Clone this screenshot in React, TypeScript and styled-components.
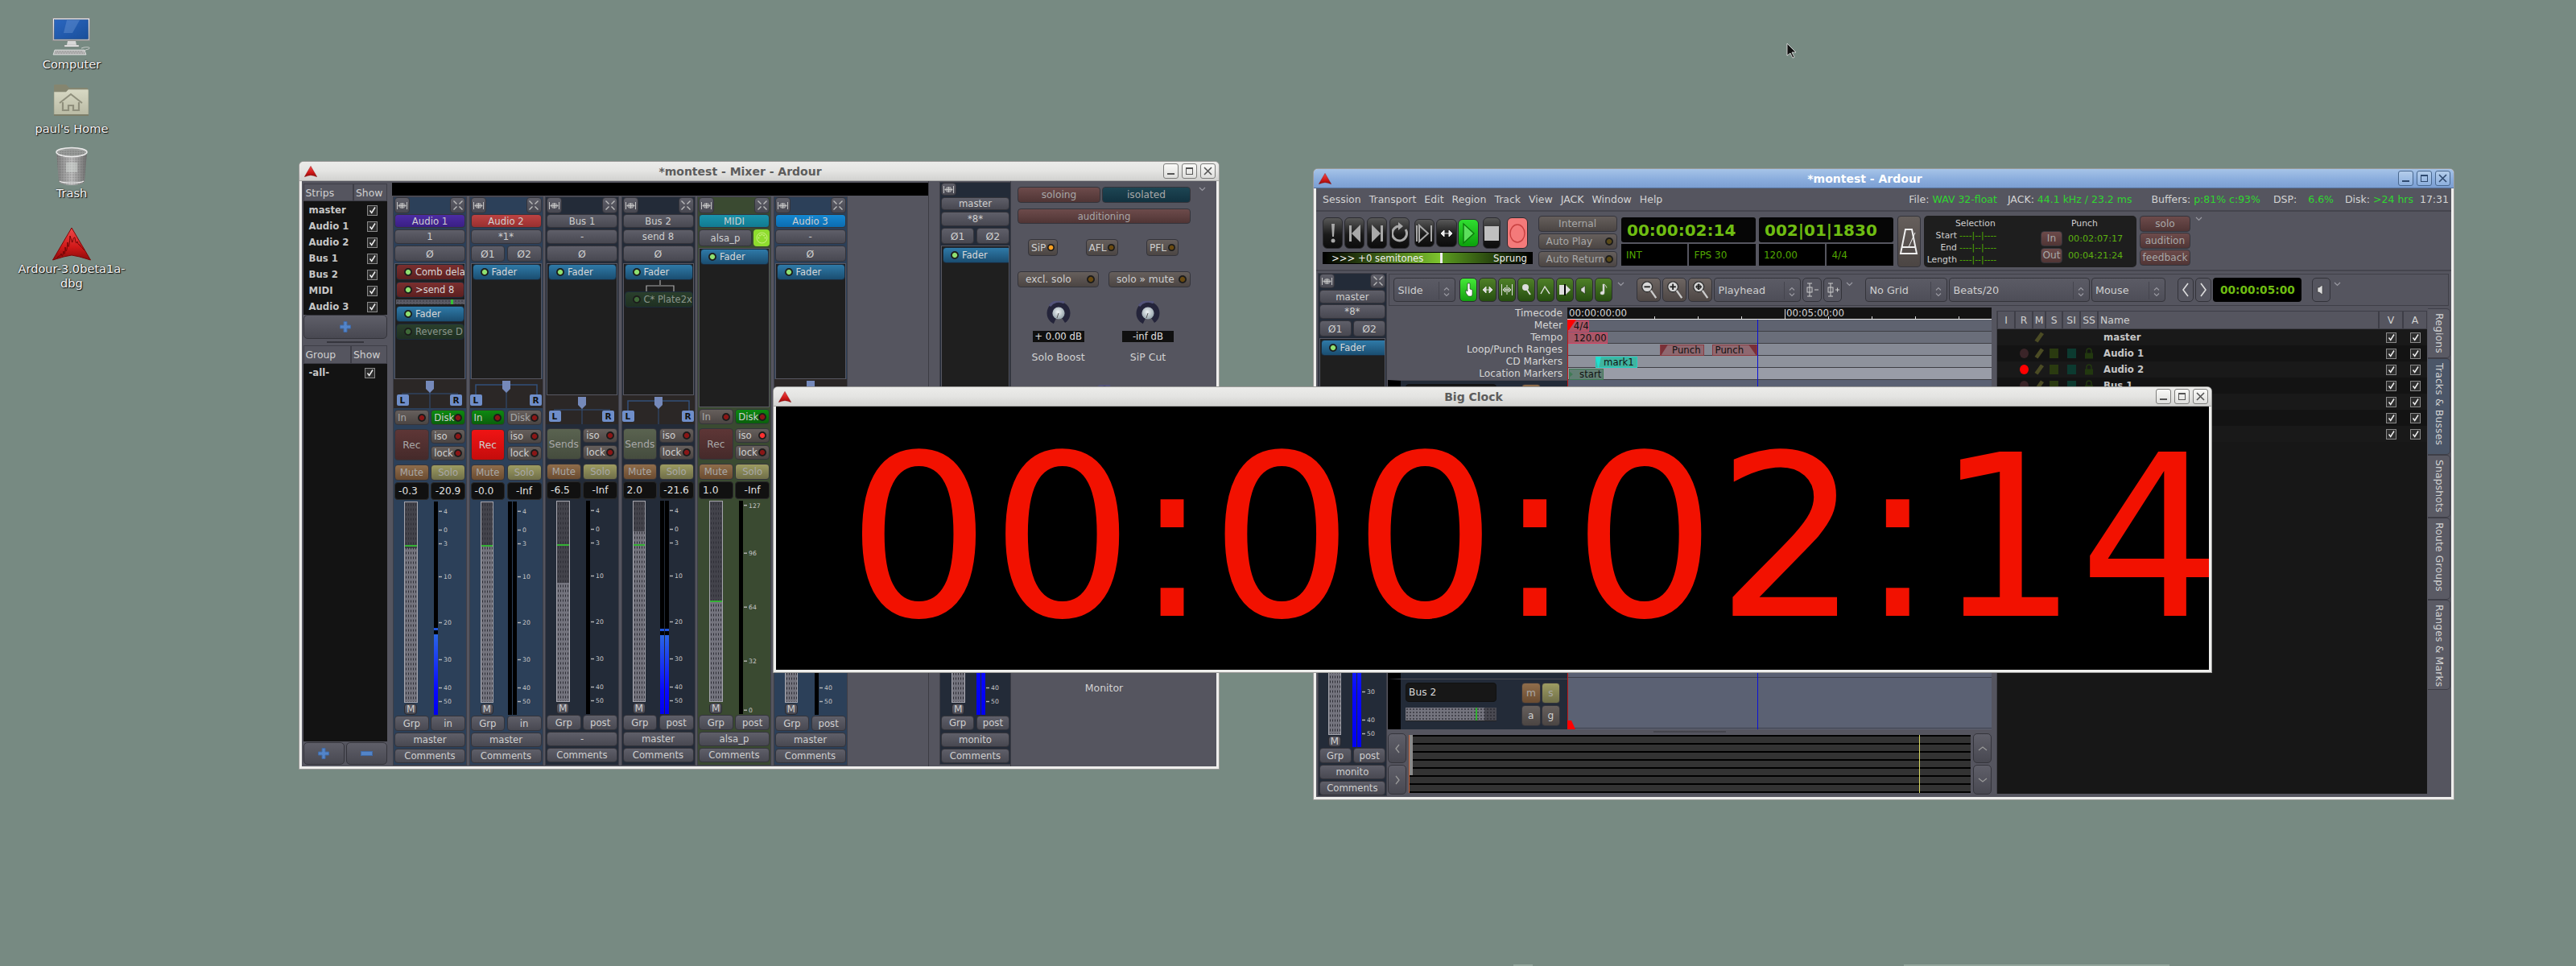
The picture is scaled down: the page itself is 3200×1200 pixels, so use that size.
import React from 'react';
import styled, { createGlobalStyle } from 'styled-components';

const UI = '"DejaVu Sans", "Liberation Sans", sans-serif';
const AUDIO = '#2c4059';
const BUS = '#232b38';
const MIDI = '#3a4a31';

const Global = createGlobalStyle`
  html, body { margin: 0; padding: 0; background: #778a82; }
  #root { width: 3200px; height: 1200px; }
  * { box-sizing: border-box; }
`;

const Desktop = styled.main`
  position: relative; width: 3200px; height: 1200px; overflow: hidden;
  background: #778a82; font-family: ${UI}; font-size: 11.7px; color: #c9c9c9;
`;

/* ---------- desktop icons ---------- */
const IconColumn = styled.div`
  position: absolute; left: 19px; top: 22px; width: 140px;
  display: flex; flex-direction: column; align-items: center;
`;
const DeskIcon = styled.div<{ $h: number }>`
  height: ${p => p.$h}px; width: 100%;
  display: flex; flex-direction: column; align-items: center;
`;
const DeskLabel = styled.div`
  font-size: 14.6px; line-height: 18px; color: #f4f4f4; text-align: center; margin-top: 1px;
  text-shadow: 1px 1px 1px #111, 0 0 2px #222;
`;
const Cursor = styled.svg`position: absolute; left: 2219px; top: 53px; z-index: 9;`;
const EdgeMark = styled.div<{ $x: number; $w: number }>`
  position: absolute; left: ${p => p.$x}px; width: ${p => p.$w}px; bottom: 0; height: 2px; background: #93a59c;
`;

const ComputerIcon = () => (
  <svg width="48" height="48" viewBox="0 0 48 48">
    <defs>
      <linearGradient id="scr" x1="0" y1="0" x2="1" y2="1"><stop offset="0" stopColor="#2a66c0" /><stop offset="1" stopColor="#1a4f9a" /></linearGradient>
      <linearGradient id="bez" x1="0" y1="0" x2="0" y2="1"><stop offset="0" stopColor="#f2f2f2" /><stop offset="1" stopColor="#b8b8b8" /></linearGradient>
    </defs>
    <rect x="0.5" y="0.5" width="46" height="28" fill="url(#bez)" stroke="#8c8c8c" />
    <rect x="2.5" y="2.5" width="42" height="24" fill="url(#scr)" stroke="#123a70" strokeWidth=".5" />
    <path d="M18 3h16l-9 16H14z" fill="#7aa3dc" opacity=".35" />
    <path d="M19 29h10l1 5H18z" fill="#d8d8d8" />
    <rect x="15" y="34" width="18" height="2" fill="#f0f0f0" stroke="#8a8a8a" strokeWidth=".4" />
    <path d="M3 40h37l2 6H1z" fill="#bcbcbc" stroke="#eee" strokeWidth=".6" />
    <path d="M4 42h34M3 44h37" stroke="#6d6d6d" strokeWidth=".8" strokeDasharray="1 1" />
    <path d="M36 38c4 -2 11 -2 10 0s-6 1-5 3" fill="none" stroke="#ddd" strokeWidth=".8" />
  </svg>
);
const HomeIcon = () => (
  <svg width="48" height="48" viewBox="0 0 48 48">
    <defs><linearGradient id="fld" x1="0" y1="0" x2="0" y2="1"><stop offset="0" stopColor="#d8d9c4" /><stop offset="1" stopColor="#b9baa4" /></linearGradient></defs>
    <path d="M3 3h14l4 4h22a1 1 0 0 1 1 1v8H2V4z" fill="#85856f" />
    <path d="M2 12h15l3-3h24a1 1 0 0 1 1 1v31H2z" fill="url(#fld)" stroke="#8f907c" strokeWidth=".6" />
    <rect x="2" y="40" width="43" height="2" fill="#7c7d68" />
    <path d="M9 26l14-11 14 11" fill="none" stroke="#8f8f7c" strokeWidth="2" />
    <path d="M13 25v10h7v-6h6v6h7V25" fill="none" stroke="#8f8f7c" strokeWidth="2.2" />
  </svg>
);
const TrashIcon = () => (
  <svg width="48" height="48" viewBox="0 0 48 48">
    <defs>
      <linearGradient id="tr" x1="0" y1="0" x2="1" y2="0"><stop offset="0" stopColor="#7f7f7f" /><stop offset=".5" stopColor="#c4c4c4" /><stop offset="1" stopColor="#6d6d6d" /></linearGradient>
      <pattern id="mesh" width="2" height="2" patternUnits="userSpaceOnUse"><rect width="1" height="1" fill="#555" opacity=".55" /></pattern>
    </defs>
    <path d="M5 7l3 36c0 3 8 5 16 5s16-2 16-5l3-36z" fill="url(#tr)" />
    <path d="M5 7l3 36c0 3 8 5 16 5s16-2 16-5l3-36z" fill="url(#mesh)" />
    <rect x="17" y="20" width="14" height="12" fill="#d4d9d6" opacity=".5" />
    <ellipse cx="24" cy="7" rx="19" ry="5.5" fill="#9b9e9c" stroke="#e8e8e8" strokeWidth="1.6" />
    <ellipse cx="24" cy="8" rx="16" ry="3.8" fill="url(#mesh)" />
    <path d="M9 43c4 3 26 3 30 0" fill="none" stroke="#eee" strokeWidth="1.2" />
  </svg>
);
const ArdourLogo = ({ w, h, idp }: { w: number; h: number; idp: string }) => (
  <svg width={w} height={h} viewBox="0 0 48 42" preserveAspectRatio="none">
    <defs><linearGradient id={idp} x1="0" y1="0" x2="0" y2="1"><stop offset="0" stopColor="#ee4a4a" /><stop offset=".6" stopColor="#d01818" /><stop offset="1" stopColor="#8c0c0c" /></linearGradient></defs>
    <path d="M24 1L47.5 41 34 37 24 35 14 37 .5 41z" fill={`url(#${idp})`} stroke="#7c0808" strokeWidth="1" />
    {w > 30 && <path d="M6 38c3-3 4-1 5-5 1 5 2 3 3-3 1 6 2 4 2 -5 1 8 2 6 3-6 1 10 2 6 3-8 2 6 2 8 3 8 1-6 2-6 3-6 1 8 2 8 3 5 1 4 2 4 3 4 1 3 4 4 6 7" fill="none" stroke="#6b0606" strokeWidth="1" />}
  </svg>
);

/* ---------- window chrome ---------- */
const Win = styled.section<{ $x: number; $y: number; $w: number; $h: number; $z: number }>`
  position: absolute; left: ${p => p.$x}px; top: ${p => p.$y}px; width: ${p => p.$w}px; height: ${p => p.$h}px;
  z-index: ${p => p.$z}; display: flex; flex-direction: column;
  background: #eeeeec; border-radius: 5px 5px 0 0; box-shadow: 0 0 0 1px #9a9a98;
`;
const TitleBar = styled.header<{ $active?: boolean }>`
  height: 24px; flex: none; display: flex; align-items: center; padding: 0 4px 0 6px;
  border-radius: 5px 5px 0 0;
  background: ${p => p.$active ? 'linear-gradient(#a6c4e8,#88abdc 60%,#7c9fd2)' : 'linear-gradient(#ececea,#e4e4e2 50%,#d2d2d0)'};
  border-bottom: 1px solid ${p => p.$active ? '#56749e' : '#aaaaa8'};
`;
const TitleText = styled.div<{ $active?: boolean }>`
  flex: 1; text-align: center; font-weight: 700; font-size: 14px;
  color: ${p => p.$active ? '#ffffff' : '#5c5c5c'}; white-space: nowrap;
`;
const TitleBtns = styled.div`display: flex; gap: 4px;`;
const TitleBtn = styled.div<{ $active?: boolean }>`
  width: 19px; height: 19px; border: 1px solid ${p => p.$active ? '#49688f' : '#7d7d7b'}; border-radius: 3px;
  background: ${p => p.$active ? 'linear-gradient(#b4cdeb,#8db0de)' : 'linear-gradient(#fafaf8,#dededc)'};
  display: flex; align-items: center; justify-content: center;
`;
const Chrome = ({ title, active, idp }: { title: string; active?: boolean; idp: string }) => {
  const c = active ? '#2f4a6f' : '#555';
  return (
    <TitleBar $active={active}>
      <ArdourLogo w={16} h={14} idp={idp} />
      <TitleText $active={active}>{title}</TitleText>
      <TitleBtns>
        <TitleBtn $active={active}><svg width="13" height="13"><rect x="2" y="9" width="9" height="2" fill={c} /></svg></TitleBtn>
        <TitleBtn $active={active}><svg width="13" height="13"><rect x="2.5" y="2.5" width="8" height="8" fill="none" stroke={c} /><rect x="2" y="2" width="9" height="2" fill={c} /></svg></TitleBtn>
        <TitleBtn $active={active}><svg width="13" height="13"><path d="M2 2l9 9M11 2l-9 9" stroke={c} strokeWidth="1.6" /></svg></TitleBtn>
      </TitleBtns>
    </TitleBar>
  );
};
const WinBody = styled.div<{ $col?: boolean }>`
  flex: 1; min-height: 0; margin: 0 3px 3px; background: #55555f; overflow: hidden; display: flex;
  flex-direction: ${p => p.$col ? 'column' : 'row'};
`;

/* ---------- shared controls ---------- */
const TONES: Record<string, string> = {
  plain: 'linear-gradient(#5f5f69,#484851)',
  warm: 'linear-gradient(#6d6462,#4e4645)',
  in: 'linear-gradient(#0d8a10,#0a5f0c)',
  rec: 'linear-gradient(#5e3636,#452a2a)',
  recOn: 'linear-gradient(#f01414,#c40c0c)',
  sends: 'linear-gradient(#5a6350,#454c3e)',
  mute: 'linear-gradient(#8f6d4b,#6a4b30)',
  solo: 'linear-gradient(#9d9c62,#6f6e48)',
  purple: 'linear-gradient(#4c2ca4,#3a1f84)',
  red: 'linear-gradient(#bc4242,#983030)',
  teal: 'linear-gradient(#1a94ac,#127a90)',
  blue: 'linear-gradient(#1488d2,#0c6cb0)',
  alert: 'linear-gradient(#6d4b4b,#503535)',
  iso: 'linear-gradient(#1d4553,#123240)',
  grey: 'linear-gradient(#665f5c,#4b4543)',
};
const Btn = styled.div<{ $h?: number; $w?: number; $tone?: string; $ml?: number; $mt?: number; $dim?: boolean; $fs?: number }>`
  ${p => p.$h ? `height:${p.$h}px; flex-shrink:0;` : ''}
  ${p => p.$w ? `width:${p.$w}px; flex:none;` : ''}
  ${p => p.$ml ? `margin-left:${p.$ml}px;` : ''}
  ${p => p.$mt ? `margin-top:${p.$mt}px;` : ''}
  display: flex; align-items: center; justify-content: center; white-space: nowrap; overflow: hidden;
  border: 1px solid #34343b; border-radius: 4px; background: ${p => TONES[p.$tone || 'plain']};
  color: ${p => p.$dim ? '#a8a8a8' : '#cfcfcf'}; font-size: ${p => p.$fs || 11.7}px;
`;
const LedBtn = styled(Btn)`justify-content: space-between; padding: 0 3px;`;
const Led = styled.i<{ $c: string; $s?: number }>`
  width: ${p => p.$s || 10}px; height: ${p => p.$s || 10}px; flex: none; border-radius: 50%;
  background: radial-gradient(circle, ${p => p.$c} 0 36%, #1a1a1a 52%, #222 100%);
`;
const Chevron = styled.svg<{ $ml?: number; $mt?: number }>`
  flex: none; margin-left: ${p => p.$ml || 0}px; margin-top: ${p => p.$mt || 0}px;
`;
const Chev = ({ ml, mt }: { ml?: number; mt?: number }) => (
  <Chevron $ml={ml} $mt={mt} width="9" height="6"><path d="M1 1l3.5 3.5L8 1" fill="none" stroke="#9a9aa2" strokeWidth="1.2" /></Chevron>
);
const Check = styled.div`
  width: 13px; height: 13px; border: 1px solid #8a8a8a; background: #2e2e2e;
  display: flex; align-items: center; justify-content: center; flex: none;
`;
const Checkbox = () => (
  <Check><svg width="11" height="11"><path d="M2.5 5.5l2.2 3L9 1.5" fill="none" stroke="#eee" strokeWidth="1.5" /></svg></Check>
);

/* ---------- mixer left column ---------- */
const LeftCol = styled.aside`
  width: 104px; margin: 3px 0 2px 1.5px; flex: none; display: flex; flex-direction: column;
`;
const HeaderRow = styled.div<{ $h: number; $split: number }>`
  height: ${p => p.$h}px; flex: none; display: grid; grid-template-columns: ${p => p.$split}px 1fr;
`;
const HeaderCell = styled.div`
  background: #55555f; border: 1px solid #3e3e47; display: flex; align-items: center; padding-left: 2px;
  color: #d0d0d0; font-size: 12.4px;
`;
const BlackList = styled.div<{ $grow?: boolean; $h?: number }>`
  background: #131313; padding-top: 1px;
  ${p => p.$grow ? 'flex:1;' : ''} ${p => p.$h ? `height:${p.$h}px; flex:none;` : ''}
`;
const ListRow = styled.div<{ $cb: number }>`
  height: 20px; display: flex; align-items: center; justify-content: space-between;
  padding: 0 ${p => p.$cb}px 0 7px; font-weight: 700; color: #c6c6c6; font-size: 11.7px;
`;
const AddBar = styled(Btn)`border-radius: 5px;`;
const PaneBtn = styled(Btn)`flex: 1; border-radius: 5px;`;
const PaneHandle = styled.div`
  height: 8px; flex: none; background-image: radial-gradient(#33333a .7px, transparent .8px);
  background-size: 2px 2px; background-repeat: repeat-x; background-position: center; margin: 0 29px;
`;
const FooterBtns = styled.div`display: flex; gap: 2px; height: 28px; flex: none; margin-top: 1px;`;
const PlusIcon = () => (
  <svg width="14" height="14"><path d="M5 .5h4v4.500h4.500v4H9v4.500H5V9H.5V5H5z" fill="#5384c8" stroke="#3f6aa8" /></svg>
);
const MinusIcon = () => <svg width="15" height="6"><rect x=".5" y=".5" width="14" height="5" fill="#5384c8" stroke="#3f6aa8" /></svg>;

/* ---------- mixer strip ---------- */
const StripArea = styled.div`
  width: 667px; margin-left: 6.5px; flex: none; display: flex; flex-direction: column;
  border-right: 1px solid #3c3c44;
`;
const BlackBar = styled.div`height: 16px; margin-top: 2px; background: #000; flex: none;`;
const StripRow = styled.div`
  display: grid; grid-template-columns: repeat(6, 90px); column-gap: 4.5px; margin-top: 2px; padding-left: 2px;
`;
const StripBox = styled.div<{ $bg: string; $w?: number; $grow?: boolean }>`
  background: ${p => p.$bg}; outline: 1px solid #3e3e47; display: flex; flex-direction: column; padding: 0 1px;
  ${p => p.$w ? `width:${p.$w}px;flex:none;` : ''}
  ${p => p.$grow ? 'height:100%;' : 'height:705px;'}
`;
const StripHead = styled.div<{ $h: number }>`
  height: ${p => p.$h}px; flex: none; display: flex; justify-content: space-between;
`;
const SquareBtn = styled(Btn)`width: 19px; flex: none; height: 100%;`;
const TwoCols = styled.div<{ $mt: number; $h: number; $cols?: string }>`
  margin-top: ${p => p.$mt}px; height: ${p => p.$h}px; flex: none; display: grid;
  grid-template-columns: ${p => p.$cols || '1fr 1fr'}; column-gap: 2.5px;
`;
const WidthIcon = () => (
  <svg width="15" height="13"><path d="M1.5 2v9M13.5 2v9M3 6.5h9M3 6.5l3-3v6zM12 6.5l-3-3v6zM7.5 3v7" stroke="#c4c4c4" fill="none" strokeWidth="1" /></svg>
);
const CloseIcon = () => (
  <svg width="14" height="14"><path d="M1.5 1.5l4 4M12.5 1.5l-4 4M1.5 12.5l4-4M12.5 12.5l-4-4" stroke="#bbb" strokeWidth="1.4" /></svg>
);
const ProcBox = styled.div<{ $h?: number }>`
  margin-top: 2px; flex: ${p => p.$h ? `none` : 1}; ${p => p.$h ? `height:${p.$h}px;` : ''}
  background: #1f1f1f; border: 1px solid #585862; overflow: hidden; padding-top: 0;
`;
const PROC: Record<string, string> = {
  red: 'linear-gradient(#7a2f2f,#5c2020)', blue: 'linear-gradient(#2f7aa8,#1a4d70)', green: 'linear-gradient(#2a3f2c,#1f3022)',
};
const ProcItem = styled.div<{ $k: string; $mt: number }>`
  margin: ${p => p.$mt}px 0 0 1px; height: 20px; width: 85px; border-radius: 4px; border: 1px solid #1c2a3a;
  background: ${p => PROC[p.$k]}; display: flex; align-items: center; gap: 4px; padding-left: 9px;
  white-space: nowrap; font-size: 11.5px;
  color: ${p => p.$k === 'green' ? '#8b968c' : '#d8d8d8'};
`;
const SendMeter = styled.div`
  margin: 2px 1px 0; height: 6px; width: 85px; background: #5a5a64; position: relative;
  background-image: radial-gradient(#33333a .6px, transparent .8px); background-size: 4px 4px;
`;
const SendTick = styled.div`position: absolute; left: 68px; top: 0; width: 3px; height: 6px; background: #35c035;`;
const Panner = styled.div`height: 36px; flex: none; background: #2b2726; margin: 0 -1px;`;
const PanSvg = ({ stereo }: { stereo: boolean }) => (
  <svg width="90" height="36">
    {stereo
      ? <path d="M7 19V7h76v12" fill="none" stroke="#33507a" strokeWidth="1.5" />
      : <path d="M10 18h70" fill="none" stroke="#33507a" strokeWidth="1.2" />}
    <path d="M45 10v26" stroke="#33507a" strokeWidth="1" />
    <path d="M40 2h10v10l-5 5-5-5z" fill="#7589ba" />
    <rect x={stereo ? 0 : 4} y="19" width="15" height="14" rx="2" fill="#6f8ec9" />
    <rect x={stereo ? 74 : 70} y="19" width="15" height="14" rx="2" fill="#6f8ec9" />
    <text x={stereo ? 3.5 : 7.5} y="30" fontSize="10.5" fontWeight="700" fontFamily={UI} fill="#111">L</text>
    <text x={stereo ? 77.5 : 73.5} y="30" fontSize="10.5" fontWeight="700" fontFamily={UI} fill="#111">R</text>
  </svg>
);
const RecCluster = styled.div`
  margin-top: 5px; height: 39px; flex: none; display: grid; grid-template-columns: 1fr 1fr;
  grid-template-rows: 18px 18px; gap: 3px 2.5px;
`;
const BigRec = styled(Btn)`grid-row: 1 / span 2; font-size: 12.2px;`;
const Readout = styled.div<{ $left?: boolean }>`
  background: #111; border-radius: 4px; border: 1px solid #2a2a2a; color: #e2e2e2; font-size: 12.2px;
  display: flex; align-items: center; justify-content: ${p => p.$left ? 'flex-start' : 'center'}; padding-left: ${p => p.$left ? 4 : 0}px;
`;

const MeterRow = styled.div<{ $pl: number; $mt?: number }>`
  margin-top: ${p => p.$mt ?? 2}px; height: 265px; flex: none; display: flex; padding-left: ${p => p.$pl}px;
`;
const FaderCol = styled.div<{ $w: number }>`width: ${p => p.$w}px; flex: none; display: flex; flex-direction: column; align-items: center;`;
const FaderTrack = styled.div`
  position: relative; width: 100%; height: 250px; flex: none; border: 1px solid #a5a5ad;
  background: #43434b; display: flex; flex-direction: column; justify-content: flex-end;
  &::after {
    content: ''; position: absolute; inset: 0;
    background-image: radial-gradient(#2e2e36 .65px, transparent .85px); background-size: 3px 6px;
  }
`;
const FaderFill = styled.div<{ $top: number }>`
  margin-top: ${p => p.$top}px; flex: 1; background: #74747e;
`;
const FaderMark = styled.div<{ $y: number }>`
  position: absolute; left: 0; right: 0; top: ${p => p.$y}px; height: 2px; background: #34b034; z-index: 1;
`;
const Mbtn = styled(Btn)`width: 16px; height: 14px; margin-top: 1px; border-radius: 4px; font-size: 12.2px; border-color: #2a2a30;`;
const Bars = styled.div<{ $ml: number }>`display: flex; gap: 1px; margin-left: ${p => p.$ml}px; flex: none;`;
const Bar = styled.div<{ $w?: number }>`
  width: ${p => p.$w || 5}px; background: #000; display: flex; flex-direction: column; height: 100%;
`;
const Peak = styled.div<{ $y: number }>`margin-top: ${p => p.$y}px; height: 3px; flex: none; background: #1f55dd;`;
const BarFill = styled.div`flex: 1; margin-top: 5px; background: linear-gradient(#2a66e6,#0808ff 70%,#0000f0);`;
const ScaleSvg = styled.svg<{ $ml: number }>`flex: none; margin-left: ${p => p.$ml}px;`;

const DB: [string, number][] = [['4', 12], ['0', 35.3], ['3', 52.3], ['10', 93.3], ['20', 150.3], ['30', 196.3], ['40', 231.3], ['50', 248.3]];
const MID: [string, number][] = [['127', 5.5], ['96', 65], ['64', 132], ['32', 199], ['0', 260]];
const Scale = ({ ticks, ml }: { ticks: [string, number][]; ml: number }) => (
  <ScaleSvg $ml={ml} width="32" height="265">
    {ticks.map(([t, y]) => (
      <g key={t}>
        <rect x="0" y={y - 0.5} width="4" height="1.4" fill="#b5b5b5" />
        <text x="6" y={y + 3} fontSize="7.7" fontFamily={UI} fill="#c6c6c6">{t}</text>
      </g>
    ))}
  </ScaleSvg>
);

type Meter = { pl: number; fw: number; fill: number; mark: number; bars: ([number] | [])[]; ml: number; sml: number; ticks?: [string, number][]; mt?: number };
const Meters = ({ m }: { m: Meter }) => (
  <MeterRow $pl={m.pl} $mt={m.mt}>
    <FaderCol $w={m.fw}>
      <FaderTrack>
        <FaderFill $top={m.fill} />
        <FaderMark $y={m.mark} />
      </FaderTrack>
      <Mbtn>M</Mbtn>
    </FaderCol>
    <Bars $ml={m.ml}>
      {m.bars.map((b, i) => (
        <Bar key={i}>
          {b.length ? <><Peak $y={b[0] as number} /><BarFill /></> : null}
        </Bar>
      ))}
    </Bars>
    <Scale ticks={m.ticks || DB} ml={m.sml} />
  </MeterRow>
);

type StripT = {
  name: string; tone?: string; route: string; phases: string[]; bg: string; box: number; pan: null | 'mono' | 'stereo';
  procs: any[]; inOn?: boolean; diskOn?: boolean; noIO?: boolean; big: string; bigTone: string; isoOn?: boolean;
  gain: string; peak: string; mode: string; out: string; meter: Meter; midi?: boolean;
};

const Proc = ({ k, label, mt, lit = true }: { k: string; label: string; mt: number; lit?: boolean }) => (
  <ProcItem $k={k} $mt={mt}><Led $c={lit ? '#8fe070' : '#3f6a38'} />{label}</ProcItem>
);
const Bracket = styled.svg`display: block; margin-left: 25px;`;

const FADER = { k: 'blue', label: 'Fader', mt: 0 };
const STRIPS: StripT[] = [
  {
    name: 'Audio 1', tone: 'purple', route: '1', phases: ['Ø'], bg: AUDIO, box: 144, pan: 'mono', diskOn: true,
    procs: [{ k: 'red', label: 'Comb dela', mt: 0 }, { k: 'red', label: '>send 8', mt: 2 }, { meter: true }, { ...FADER, mt: 2 }, { k: 'green', label: 'Reverse D', mt: 2, lit: false }],
    big: 'Rec', bigTone: 'rec', gain: '-0.3', peak: '-20.9', mode: 'in', out: 'master',
    meter: { pl: 12, fw: 16.5, fill: 57, mark: 53, bars: [[156.5]], ml: 20.5, sml: 1 },
  },
  {
    name: 'Audio 2', tone: 'red', route: '*1*', phases: ['Ø1', 'Ø2'], bg: AUDIO, box: 144, pan: 'stereo', inOn: true,
    procs: [FADER], big: 'Rec', bigTone: 'recOn', gain: '-0.0', peak: '-Inf', mode: 'in', out: 'master',
    meter: { pl: 12, fw: 16.5, fill: 53, mark: 53, bars: [[], []], ml: 18, sml: 1 },
  },
  {
    name: 'Bus 1', route: '-', phases: ['Ø'], bg: BUS, box: 164, pan: 'mono', noIO: true,
    procs: [FADER], big: 'Sends', bigTone: 'sends', gain: '-6.5', peak: '-Inf', mode: 'post', out: '-',
    meter: { pl: 12, fw: 16.5, fill: 101, mark: 53, bars: [[]], ml: 20.5, sml: 1 },
  },
  {
    name: 'Bus 2', route: 'send 8', phases: ['Ø'], bg: BUS, box: 164, pan: 'stereo', noIO: true,
    procs: [FADER, { bracket: true }, { k: 'green', label: 'C* Plate2x', mt: 0, lit: false }],
    big: 'Sends', bigTone: 'sends', gain: '2.0', peak: '-21.6', mode: 'post', out: 'master',
    meter: { pl: 12, fw: 16.5, fill: 37, mark: 53, bars: [[159], [159]], ml: 18, sml: 1 },
  },
  {
    name: 'MIDI', tone: 'teal', route: 'alsa_p', phases: [], bg: MIDI, box: 198, pan: null, diskOn: true, midi: true,
    procs: [FADER], big: 'Rec', bigTone: 'rec', isoOn: true, gain: '1.0', peak: '-Inf', mode: 'post', out: 'alsa_p',
    meter: { pl: 13, fw: 16.5, fill: 123, mark: 123, bars: [[]], ml: 20.5, sml: 1, ticks: MID },
  },
  {
    name: 'Audio 3', tone: 'blue', route: '-', phases: ['Ø'], bg: AUDIO, box: 144, pan: 'mono', diskOn: true,
    procs: [FADER], big: 'Rec', bigTone: 'rec', gain: '0.0', peak: '-Inf', mode: 'post', out: 'master',
    meter: { pl: 12, fw: 16.5, fill: 53, mark: 53, bars: [[]], ml: 20.5, sml: 1 },
  },
];

const RED_OFF = '#8a1616';
const MidiDot = styled.div`
  width: 20px; flex: none; background: #8edc2e; border-radius: 4px; display: flex; align-items: center; justify-content: center;
`;
const RouteRow = styled.div<{ $h: number }>`display: flex; gap: 2px; margin-top: 2px; height: ${p => p.$h}px; flex: none;`;
const RouteBtn = styled(Btn)`flex: 1;`;

const MixerStrip = ({ s }: { s: StripT }) => (
  <StripBox $bg={s.bg}>
    <StripHead $h={20}>
      <SquareBtn><WidthIcon /></SquareBtn>
      <SquareBtn><CloseIcon /></SquareBtn>
    </StripHead>
    <Btn $h={17} $mt={1} $tone={s.tone}>{s.name}</Btn>
    {s.midi ? (
      <RouteRow $h={21}>
        <RouteBtn>{s.route}</RouteBtn>
        <MidiDot><svg width="15" height="15"><circle cx="7.5" cy="7.5" r="6.5" fill="none" stroke="#c8f080" /><circle cx="3.5" cy="7.5" r="1" fill="#c8f080" /><circle cx="11.5" cy="7.5" r="1" fill="#c8f080" /><circle cx="7.5" cy="3.5" r="1" fill="#c8f080" /><circle cx="5" cy="4.5" r="1" fill="#c8f080" /><circle cx="10" cy="4.5" r="1" fill="#c8f080" /></svg></MidiDot>
      </RouteRow>
    ) : (
      <>
        <Btn $h={18} $mt={2}>{s.route}</Btn>
        <TwoCols $mt={2} $h={20} $cols={s.phases.length > 1 ? '1fr 1fr' : '1fr'}>
          {s.phases.map(p => <Btn key={p} $fs={12.4}>{p}</Btn>)}
        </TwoCols>
      </>
    )}
    <ProcBox $h={s.box}>
      {s.procs.map((p, i) => p.meter
        ? <SendMeter key={i}><SendTick /></SendMeter>
        : p.bracket
          ? <Bracket key={i} width="40" height="14"><path d="M20 0v6M3 14V7h34v7" fill="none" stroke="#a8a8a8" strokeWidth="1.2" /></Bracket>
          : <Proc key={i} k={p.k} label={p.label} mt={p.mt} lit={p.lit !== false} />)}
    </ProcBox>
    {s.pan && <Panner><PanSvg stereo={s.pan === 'stereo'} /></Panner>}
    {!s.noIO && (
      <TwoCols $mt={2} $h={19}>
        <LedBtn $tone={s.inOn ? 'in' : 'grey'} $dim={!s.inOn}>In<Led $c={RED_OFF} /></LedBtn>
        <LedBtn $tone={s.diskOn ? 'in' : 'grey'} $dim={!s.diskOn}>Disk<Led $c={RED_OFF} /></LedBtn>
      </TwoCols>
    )}
    <RecCluster>
      <BigRec $tone={s.bigTone} $dim={s.bigTone !== 'recOn'}>{s.big}</BigRec>
      <LedBtn $tone="grey">iso<Led $c={s.isoOn ? '#ff3030' : RED_OFF} /></LedBtn>
      <LedBtn $tone="grey">lock<Led $c={RED_OFF} /></LedBtn>
    </RecCluster>
    <TwoCols $mt={5} $h={20}>
      <Btn $tone="mute" $dim>Mute</Btn>
      <Btn $tone="solo" $dim>Solo</Btn>
    </TwoCols>
    <TwoCols $mt={2} $h={22}>
      <Readout $left>{s.gain}</Readout>
      <Readout>{s.peak}</Readout>
    </TwoCols>
    <Meters m={s.meter} />
    <TwoCols $mt={1} $h={19}>
      <Btn>Grp</Btn>
      <Btn>{s.mode}</Btn>
    </TwoCols>
    <Btn $h={18} $mt={2}>{s.out}</Btn>
    <Btn $h={18} $mt={2}>Comments</Btn>
  </StripBox>
);

/* ---------- mixer master + monitor ---------- */
const MasterColumn = styled.div`width: 87px; margin: 2px 0 3px 14px; flex: none;`;
const MonitorPane = styled.div`flex: 1; padding: 7px 0 0 8px; border-left: 1px solid #3c3c44; display: flex; flex-direction: column;`;
const MonRow = styled.div<{ $mt?: number; $h: number; $gap?: number }>`
  display: flex; margin-top: ${p => p.$mt || 0}px; height: ${p => p.$h}px; gap: ${p => p.$gap || 0}px; flex: none;
`;
const KnobGrid = styled.div`display: grid; grid-template-columns: 101.2px 121.6px; margin-top: 17px; flex: none;`;
const KnobCol = styled.div`display: flex; flex-direction: column; align-items: center;`;
const KnobValue = styled.div`
  width: 64px; height: 14px; margin-top: 7px; background: #101010; color: #e0e0e0; font-size: 11.7px;
  display: flex; align-items: center; justify-content: center; white-space: nowrap;
`;
const KnobLabel = styled.div<{ $mt?: number }>`margin-top: ${p => p.$mt ?? 11}px; height: 16px; line-height: 16px; color: #d2d2d2; font-size: 12.5px; white-space: nowrap;`;
const CenterCol = styled.div`width: 215px; margin-top: 26px; display: flex; flex-direction: column; align-items: center; flex: none;`;
const Knob = ({ id }: { id: string }) => (
  <svg width="30" height="30" viewBox="0 0 30 30">
    <defs><radialGradient id={id} cx=".45" cy=".4" r=".6"><stop offset="0" stopColor="#eef2f4" /><stop offset="1" stopColor="#95a3ab" /></radialGradient></defs>
    <circle cx="15" cy="15" r="14.5" fill="#24243a" />
    <path d="M15 15L25 30H8z" fill="#55555f" />
    <path d="M4 6a14 14 0 0 1 18-4" fill="none" stroke="#54547a" strokeWidth="3" />
    <circle cx="15" cy="15" r="7.6" fill={`url(#${id})`} />
    <path d="M15 15l-2 6" stroke="#555" strokeWidth="1" />
  </svg>
);

/* ---------- ardour transport ---------- */
const MenuBar = styled.nav`
  height: 29px; flex: none; display: flex; align-items: center; padding-left: 8px; font-size: 12.5px;
  border-bottom: 2px solid #45454e; color: #d4d4d4; white-space: nowrap;
`;
const MenuItem = styled.span`margin-right: 10px;`;
const Stat = styled.span<{ $g?: boolean; $ml?: number }>`
  color: ${p => p.$g ? '#30d630' : '#d4d4d4'}; ${p => p.$ml ? `margin-left:${p.$ml}px;` : ''}
`;
const StatGroup = styled.div`margin-left: auto; padding-right: 3px; display: flex; white-space: pre;`;
const TransportBar = styled.div`height: 74px; flex: none; display: flex; border-bottom: 2px solid #45454e; padding-left: 8px;`;
const TransportLeft = styled.div`width: 261px; flex: none; padding-top: 7px;`;
const TButtons = styled.div`display: flex; align-items: center; height: 39px;`;
const TBtn = styled.div<{ $w: number; $ml?: number; $h?: number; $k?: string }>`
  width: ${p => p.$w}px; height: ${p => p.$h || 39}px; margin-left: ${p => p.$ml || 0}px; flex: none;
  border-radius: 6px; display: flex; align-items: center; justify-content: center;
  background: ${p => p.$k === 'play' ? 'linear-gradient(#30de30,#0ca00c)' : p.$k === 'rec' ? '#f47a7a' : 'linear-gradient(#585858,#1a1a1a 55%,#0c0c0c)'};
  border: 1px solid #2b2b30;
`;
const Shuttle = styled.div`
  margin-top: 4px; height: 15px; border: 1px solid #000; position: relative; color: #eee; font-size: 11.7px;
  background: linear-gradient(90deg,#000 0,#7dc42e 56%,#eee 56%,#eee 57%,#5a9a20 57.1%,#000 100%);
  display: flex; align-items: center; justify-content: space-between; padding: 0 6px 0 10px; white-space: nowrap;
`;
const AutoCol = styled.div`width: 98px; margin: 5px 0 0 6.6px; flex: none; display: flex; flex-direction: column; gap: 2px;`;
const AutoBtn = styled(LedBtn)`padding: 0 4px 0 9px;`;
const ClockGrid = styled.div`width: 338px; margin: 7px 0 0 5.4px; flex: none; display: flex; gap: 4px;`;
const ClockPair = styled.div`
  width: 167px; flex: none; display: grid; grid-template-columns: 1fr 1fr; grid-template-rows: 31px 27px; gap: 2px;
`;
const ClockMain = styled.div`
  grid-column: span 2; background: #060606; color: #6fbd12; font-weight: 700; font-size: 20px; border-radius: 3px;
  display: flex; align-items: center; padding-left: 7px; white-space: nowrap;
`;
const ClockCell = styled.div`
  background: #000; color: #52a800; font-size: 12px; display: flex; align-items: center; padding-left: 6px; white-space: nowrap;
`;
const Metro = styled(Btn)`margin: 5px 0 0 5px; width: 29px; height: 64px; flex: none;`;
const SelPanel = styled.div`
  width: 264px; height: 64px; margin: 5px 0 0 4px; flex: none; background: #1e1e1e; border-radius: 5px;
  display: grid; grid-template-columns: 145px 1fr; font-size: 10.8px; color: #d0d0d0;
`;
const SelCol = styled.div`display: flex; flex-direction: column; padding-top: 3px;`;
const SelHead = styled.div<{ $pl: number }>`height: 14px; line-height: 14px; padding-left: ${p => p.$pl}px; white-space: nowrap;`;
const SelLine = styled.div<{ $mt?: number }>`
  display: flex; align-items: center; height: 14px; margin-top: ${p => p.$mt || 0}px; white-space: nowrap;
`;
const SelName = styled.div`width: 41px; text-align: right; margin-right: 3px; flex: none;`;
const DashVal = styled.span`color: #50b000; letter-spacing: 0; font-size: 10.8px;`;
const PunchRow = styled.div<{ $mt?: number }>`display: flex; align-items: center; gap: 7px; height: 20px; margin-top: ${p => p.$mt || 0}px;`;
const PunchVal = styled.span`color: #5cb010; font-size: 11.2px;`;
const AlertCol = styled.div`width: 63px; margin: 5px 0 0 4px; flex: none; display: flex; flex-direction: column; gap: 1px;`;

const g = '#a9a9a9';
const Ic = ({ children, w = 20, h = 30 }: any) => <svg width={w} height={h} viewBox={`0 0 ${w} ${h}`}>{children}</svg>;

/* ---------- ardour editor ---------- */
const MainRow = styled.div`flex: 1; min-height: 0; display: flex; padding: 3px 0 2px 2.6px;`;
const RightCol = styled.div`flex: 1; margin-left: 2px; display: flex; flex-direction: column; min-width: 0;`;
const Toolbar = styled.div`
  height: 40px; flex: none; margin: 0 3px 0 1.4px; border: 1px solid #3f3f47; display: flex; align-items: center; padding-left: 5px;
`;
const Select = styled.div<{ $w: number; $ml?: number }>`
  width: ${p => p.$w}px; height: 30px; margin-left: ${p => p.$ml || 0}px; flex: none; border: 1px solid #34343b; border-radius: 4px;
  background: linear-gradient(#5b5b65,#4e4e58); display: flex; align-items: center; padding-left: 4px; position: relative;
  font-size: 12.8px; color: #cfcfcf; white-space: nowrap;
`;
const SelArrow = styled.svg`position: absolute; right: 0; top: 4px; border-left: 1px solid #45454e; padding: 3px 5px 0 4px; width: 20px; height: 22px;`;
const SelectBox = ({ w, ml, children }: any) => (
  <Select $w={w} $ml={ml}>{children}<SelArrow viewBox="0 0 10 18"><path d="M2 7l3-3 3 3M2 11l3 3 3-3" fill="none" stroke="#9a9aa2" strokeWidth="1.1" /></SelArrow></Select>
);
const ModeBtn = styled.div<{ $on?: boolean; $ml?: number }>`
  width: 22px; height: 30px; margin-left: ${p => p.$ml ?? 2}px; flex: none; border-radius: 5px; border: 1px solid #2c2c30;
  background: ${p => p.$on ? 'linear-gradient(#44e838,#14a010)' : 'linear-gradient(#4f8028,#264e10)'};
  display: flex; align-items: center; justify-content: center;
`;
const ZoomBtn = styled.div<{ $w?: number; $ml?: number; $plain?: boolean }>`
  width: ${p => p.$w || 30}px; height: 30px; margin-left: ${p => p.$ml ?? 2}px; flex: none; border-radius: 5px; border: 1px solid #33333a;
  background: ${p => p.$plain ? '#55555f' : 'linear-gradient(#6d6562,#4d4644)'};
  display: flex; align-items: center; justify-content: center;
`;
const NudgeClock = styled.div`
  width: 110px; height: 30px; margin-left: 2px; flex: none; background: #000; border-radius: 4px; color: #6fbd12;
  font-weight: 700; font-size: 13.7px; display: flex; align-items: center; justify-content: center;
`;
const LowerRow = styled.div`flex: 1; min-height: 0; margin-top: 2px; display: flex;`;
const EditorCol = styled.div`width: 750px; flex: none; display: flex; flex-direction: column;`;
const EditorTop = styled.div`height: 524px; flex: none; display: flex;`;
const RulerLabels = styled.div`width: 223px; flex: none; display: flex; flex-direction: column; background: #55555f;`;
const RulerLabel = styled.div`
  height: 15px; flex: none; text-align: right; padding-right: 6px; line-height: 15px; color: #d6d6d6; font-size: 12.2px; white-space: nowrap;
`;
const TrackHeader = styled.div<{ $h: number }>`
  height: ${p => p.$h}px; flex: none; display: flex; background: ${BUS}; border-left: 16px solid #000; padding: 4px 0 0 6px; position: relative;
  border-top: 1px solid #4a4a52;
`;
const HeadLeft = styled.div`width: 113px; flex: none;`;
const TrackName = styled.div`
  height: 24px; background: #171717; border-radius: 4px; border: 1px solid #111; color: #d8d8d8; font-size: 12.2px;
  display: flex; align-items: center; padding-left: 3px;
`;
const MiniFader = styled.div`
  margin-top: 7px; height: 17px; background: #74747e; position: relative; border-bottom: 1px solid #222;
  background-image: radial-gradient(#33333b .65px, transparent .85px); background-size: 4px 4px;
`;
const MiniDark = styled.div`position: absolute; right: 0; top: 0; bottom: 0; width: 15px; background: rgba(30,30,36,.5);`;
const MiniMark = styled.div`position: absolute; right: 24px; top: 0; bottom: 0; width: 2px; background: #34b034;`;
const HeadBtns = styled.div`
  margin-left: 31px; width: 48px; display: grid; grid-template-columns: 23.5px 23.5px; grid-template-rows: 26px 26px; gap: 2px 1px; flex: none;
`;
const Canvas = styled.div`flex: 1; min-width: 0; position: relative; background: #5b6173; display: flex; flex-direction: column; overflow: hidden;`;
const Ruler = styled.div`
  height: 15px; flex: none; background: #131313; border-bottom: 1px solid #f0f0f0; position: relative; color: #d8d8d8; font-size: 11.8px; line-height: 15px;
`;
const RulerText = styled.span<{ $x: number }>`position: absolute; left: ${p => p.$x}px; top: 0;`;
const RulerTick = styled.i<{ $x: number; $h: number }>`position: absolute; left: ${p => p.$x}px; bottom: 0; width: 1px; height: ${p => p.$h}px; background: #ddd;`;
const MarkRow = styled.div<{ $c: string }>`height: 15px; flex: none; background: ${p => p.$c}; border-bottom: 1px solid #3e3e44;`;
const Track = styled.div<{ $h: number }>`height: ${p => p.$h}px; flex: none; border-bottom: 1px solid #3e404c;`;
const Marker = styled.div<{ $x: number; $y: number; $w: number; $h: number; $bg: string; $bd: string; $pl?: number }>`
  position: absolute; left: ${p => p.$x}px; top: ${p => p.$y}px; width: ${p => p.$w}px; height: ${p => p.$h}px;
  background: ${p => p.$bg}; border: 1px solid ${p => p.$bd}; color: #111; font-size: 11.7px; display: flex; align-items: center;
  padding-left: ${p => p.$pl ?? 3}px; white-space: nowrap; overflow: hidden;
`;
const MarkerFlag = styled.svg<{ $x: number; $y: number }>`position: absolute; left: ${p => p.$x}px; top: ${p => p.$y}px; z-index: 3;`;
const VLine = styled.div<{ $x: number; $c: string; $top?: number }>`
  position: absolute; left: ${p => p.$x}px; top: ${p => p.$top || 0}px; bottom: 0; width: 1px; background: ${p => p.$c}; z-index: 2;
`;
const Handle = styled.div`
  height: 5px; flex: none; background-image: radial-gradient(#33333a .6px, transparent .8px); background-size: 2px 2px;
  background-repeat: repeat-x; background-position: center; margin: 0 330px;
`;
const SummaryRow = styled.div`flex: 1; min-height: 0; display: flex; gap: 2px; padding: 0 0 1px 0.3px;`;
const NavCol = styled.div`width: 23px; flex: none; display: flex; flex-direction: column; gap: 2px;`;
const NavBtn = styled(Btn)`flex: 1; border-radius: 5px;`;
const Summary = styled.div`flex: 1; min-width: 0; background: #000; padding: 2px 0; display: flex; flex-direction: column; gap: 2px; position: relative; margin: 2px 1px;`;
const SumLine = styled.div`flex: 1; background: #333;`;
const SumMark = styled.div<{ $x: number; $c: string; $w?: number; $bottom?: number }>`
  position: absolute; left: ${p => p.$x}px; top: 0; bottom: ${p => p.$bottom || 0}px; width: ${p => p.$w || 1}px; background: ${p => p.$c};
`;

const TrackList = styled.div`
  width: 535px; margin: 4px 0 2px 6px; flex: none; background: #171717; display: flex; flex-direction: column; border-left: 1px solid #44444c;
`;
const COLS = '22px 22px 16px 21px 22px 22px 349px 30px 30px';
const ListHead = styled.div`
  height: 23px; flex: none; display: grid; grid-template-columns: ${COLS}; background: #55555f;
`;
const ListHeadCell = styled.div<{ $left?: boolean }>`
  border: 1px solid #3e3e47; display: flex; align-items: center; justify-content: ${p => p.$left ? 'flex-start' : 'center'}; padding-left: ${p => p.$left ? 2 : 0}px;
  color: #d0d0d0; font-size: 12.4px; white-space: nowrap;
`;
const TrackRow = styled.div<{ $alt?: boolean }>`
  height: 20px; flex: none; display: grid; grid-template-columns: ${COLS}; align-items: center; justify-items: center;
  background: ${p => p.$alt ? '#131313' : '#191919'};
`;
const TrackRowName = styled.div`justify-self: start; padding-left: 7px; font-weight: 700; font-size: 11.7px; color: #c6c6c6;`;
const RecDot = styled.i<{ $on: boolean }>`width: 11px; height: 12px; border-radius: 50%; background: ${p => p.$on ? '#ff0000' : '#3a2428'};`;
const Swatch = styled.i<{ $c: string }>`width: 11px; height: 12px; background: ${p => p.$c};`;
const Tabs = styled.div`width: 28px; margin: 1px 0 0 1px; flex: none; display: flex; flex-direction: column; align-items: stretch;`;
const Tab = styled.div<{ $h: number; $on?: boolean }>`
  height: ${p => p.$h}px; flex: none; writing-mode: vertical-rl; display: flex; align-items: center; justify-content: flex-start;
  padding-top: 5px; border: 1px solid #3e3e47; border-left: none; border-radius: 0 5px 5px 0; font-size: 12.3px; white-space: nowrap;
  background: ${p => p.$on ? '#4b5668' : '#5a5a64'}; color: #d2d2d2; letter-spacing: .2px;
`;

/* ---------- big clock ---------- */
const BigClockBody = styled.div`
  flex: 1; margin: 0 3px 3px; background: #000; overflow: hidden; padding-left: 88.5px;
  font-family: "DejaVu Sans", sans-serif; font-size: 280px; line-height: 326px; color: #f21100; white-space: nowrap; letter-spacing: 0;
`;

const VISIBLE_40_50: [string, number][] = [['40', 231.3], ['50', 248.3]];
const VISIBLE_30_50: [string, number][] = [['30', 196.3], ['40', 231.3], ['50', 248.3]];

const Mixer = () => (
  <Win $x={372} $y={201} $w={1142} $h={754} $z={1}>
    <Chrome title="*montest - Mixer - Ardour" idp="l1" />
    <WinBody>
      <LeftCol>
        <HeaderRow $h={22} $split={62.5}><HeaderCell>Strips</HeaderCell><HeaderCell>Show</HeaderCell></HeaderRow>
        <BlackList $h={141}>
          {['master', 'Audio 1', 'Audio 2', 'Bus 1', 'Bus 2', 'MIDI', 'Audio 3'].map(n => (
            <ListRow key={n} $cb={12}>{n}<Checkbox /></ListRow>
          ))}
        </BlackList>
        <AddBar $h={30}><PlusIcon /></AddBar>
        <PaneHandle />
        <HeaderRow $h={23} $split={59.5}><HeaderCell>Group</HeaderCell><HeaderCell>Show</HeaderCell></HeaderRow>
        <BlackList $grow>
          <ListRow $cb={15}>-all-<Checkbox /></ListRow>
        </BlackList>
        <FooterBtns>
          <PaneBtn><PlusIcon /></PaneBtn>
          <PaneBtn><MinusIcon /></PaneBtn>
        </FooterBtns>
      </LeftCol>
      <StripArea>
        <BlackBar />
        <StripRow>{STRIPS.map(s => <MixerStrip key={s.name} s={s} />)}</StripRow>
      </StripArea>
      <MasterColumn>
        <StripBox $bg={BUS} $grow>
          <StripHead $h={16}><SquareBtn><WidthIcon /></SquareBtn></StripHead>
          <Btn $h={16} $mt={2}>master</Btn>
          <Btn $h={18} $mt={2}>*8*</Btn>
          <TwoCols $mt={2} $h={20}><Btn $fs={12.4}>Ø1</Btn><Btn $fs={12.4}>Ø2</Btn></TwoCols>
          <ProcBox $h={316}><Proc k="blue" label="Fader" mt={1} /></ProcBox>
          <Meters m={{ pl: 13, fw: 16.5, fill: 53, mark: 53, bars: [[40], [40]], ml: 14, sml: 1, mt: 2, ticks: VISIBLE_40_50 }} />
          <TwoCols $mt={1} $h={18}><Btn>Grp</Btn><Btn>post</Btn></TwoCols>
          <Btn $h={18} $mt={3}>monito</Btn>
          <Btn $h={18} $mt={2}>Comments</Btn>
        </StripBox>
      </MasterColumn>
      <MonitorPane>
        <MonRow $h={20} $gap={2}>
          <Btn $w={103} $tone="alert" $dim $fs={12.2}>soloing</Btn>
          <Btn $w={110} $tone="iso" $dim $fs={12.2}>isolated</Btn>
          <Chev ml={8} />
        </MonRow>
        <MonRow $mt={7} $h={19}><Btn $w={215} $tone="alert" $dim $fs={11.7}>auditioning</Btn></MonRow>
        <MonRow $mt={19} $h={21}>
          <LedBtn $w={36.5} $ml={13} $tone="grey" $fs={12.2}>SiP<Led $c="#ffa020" $s={9} /></LedBtn>
          <LedBtn $w={40} $ml={35} $tone="grey" $fs={12.2}>AFL<Led $c="#6a4a10" $s={9} /></LedBtn>
          <LedBtn $w={39.5} $ml={35.5} $tone="grey" $fs={12.2}>PFL<Led $c="#6a4a10" $s={9} /></LedBtn>
        </MonRow>
        <MonRow $mt={19} $h={20}>
          <AutoBtn $w={100.6} $tone="grey" $fs={12.2}>excl. solo<Led $c="#6a4a10" /></AutoBtn>
          <AutoBtn $w={102} $ml={12.4} $tone="grey" $fs={12.2}>solo » mute<Led $c="#6a4a10" /></AutoBtn>
        </MonRow>
        <KnobGrid>
          <KnobCol><Knob id="k1" /><KnobValue>+ 0.00 dB</KnobValue><KnobLabel>Solo Boost</KnobLabel></KnobCol>
          <KnobCol><Knob id="k2" /><KnobValue>-inf dB</KnobValue><KnobLabel>SiP Cut</KnobLabel></KnobCol>
        </KnobGrid>
        <CenterCol>
          <Knob id="k3" />
          <KnobLabel $mt={339}>Monitor</KnobLabel>
        </CenterCol>
      </MonitorPane>
    </WinBody>
  </Win>
);

const MODE_ICONS = [
  <path d="M7 3v10l-2-2v4l3 4h4l1-2v-6l-3-1V3z" fill="#fff" stroke="#222" strokeWidth=".6" />,
  <path d="M2 11h12M2 11l4-4v8zM14 11l-4-4v8z" fill="#ddd" stroke="#ddd" />,
  <path d="M1.500 4v14M14.500 4v14M3 11h10M3 11l3-3v6zM13 11l-3-3v6zM8 5v12" stroke="#ddd" fill="none" />,
  <g><circle cx="7" cy="8" r="4" fill="#ddd" /><path d="M9 11l4 6" stroke="#ddd" strokeWidth="2" /></g>,
  <path d="M2 16l5-9 6 9" fill="none" stroke="#ddd" strokeWidth="1.4" />,
  <g><rect x="1" y="5" width="7" height="12" fill="#ddd" /><path d="M9 5v12l6-6z" fill="#ddd" /><rect x="7" y="4" width="2" height="14" fill="#000" /></g>,
  <path d="M9 6v10L5 13H4V9h1z" fill="#ddd" stroke="#222" strokeWidth=".5" />,
  <path d="M9 4v11a2.500 2 0 1 1-2-2V4zM9 4c2 2 3 3 3 5" fill="#ddd" stroke="#ccc" strokeWidth=".5" />,
];
const Mag = ({ sign }: { sign: string }) => (
  <svg width="24" height="26" viewBox="0 0 26 28">
    <circle cx="11" cy="10" r="7" fill="#d8d8d8" stroke="#333" strokeWidth="1.5" />
    <path d="M16 15l7 10" stroke="#ccc" strokeWidth="2.5" />
    {sign !== '-' && <path d="M11 6v8" stroke="#222" strokeWidth="2" />}
    <path d="M7 10h8" stroke="#222" strokeWidth="2" />
    {sign === '=' && <circle cx="11" cy="10" r="3" fill="none" stroke="#222" />}
  </svg>
);

const TRACKS = ['master', 'Audio 1', 'Audio 2', 'Bus 1', '', '', ''];
const Pencil = () => <svg width="12" height="14"><path d="M4.500 13.500L.5 11 8 .5l4 2.500z" fill="#4b4b24" /></svg>;
const LockIc = () => <svg width="12" height="14"><path d="M3 7V4a3 3 0 0 1 6 0v3" fill="none" stroke="#22380f" strokeWidth="1.5" /><rect x="1" y="6.500" width="10" height="7" fill="#22380f" /></svg>;

const Ardour = () => (
  <Win $x={1632} $y={210} $w={1416} $h={783} $z={2}>
    <Chrome title="*montest - Ardour" active idp="l2" />
    <WinBody $col>
      <MenuBar>
        {['Session', 'Transport', 'Edit', 'Region', 'Track', 'View', 'JACK', 'Window', 'Help'].map(m => <MenuItem key={m}>{m}</MenuItem>)}
        <StatGroup>
          <Stat>File: </Stat><Stat $g>WAV 32-float</Stat>
          <Stat $ml={13}>JACK: </Stat><Stat $g>44.1 kHz / 23.2 ms</Stat>
          <Stat $ml={24}>Buffers: </Stat><Stat $g>p:81% c:93%</Stat>
          <Stat $ml={16}>DSP: </Stat><Stat $g $ml={10}>6.6%</Stat>
          <Stat $ml={14}>Disk: </Stat><Stat $g>&gt;24 hrs</Stat>
          <Stat $ml={8}>17:31</Stat>
        </StatGroup>
      </MenuBar>
      <TransportBar>
        <TransportLeft>
          <TButtons>
            <TBtn $w={25}><Ic w={12} h={30}><path d="M4 3h4l-1 16H5z" fill={g} /><circle cx="6" cy="24" r="2.5" fill={g} /></Ic></TBtn>
            <TBtn $w={25} $ml={2}><Ic><rect x="3" y="5" width="3" height="20" fill={g} /><path d="M17 4v22L6 15z" fill={g} /></Ic></TBtn>
            <TBtn $w={25} $ml={3}><Ic><rect x="14" y="5" width="3" height="20" fill={g} /><path d="M3 4v22l11-11z" fill={g} /></Ic></TBtn>
            <TBtn $w={25} $ml={3}><Ic><path d="M10 6a9 9 0 1 0 7 4" fill="none" stroke={g} strokeWidth="3" /><path d="M8 1l6 5-6 5z" fill={g} /></Ic></TBtn>
            <TBtn $w={25.5} $ml={5.5} $h={35}><Ic w={22} h={30}><path d="M2 5v20M20 5v20" stroke={g} strokeWidth="2" /><path d="M5 5v20l11-10z" fill="none" stroke={g} strokeWidth="2" /></Ic></TBtn>
            <TBtn $w={25.6} $ml={2} $h={35}><Ic w={18} h={16}><path d="M2 8h14M2 8l4-4v8zM16 8l-4-4v8z" fill="#eee" stroke="#eee" /></Ic></TBtn>
            <TBtn $w={25.6} $ml={1.4} $h={35} $k="play"><Ic w={18} h={30}><path d="M3 3v24l13-12z" fill="#5ce05c" stroke="#0c7a0c" strokeWidth="1.4" /></Ic></TBtn>
            <TBtn $w={22} $ml={5.4}><Ic w={18} h={18}><rect width="18" height="18" fill="#bfbfbf" /></Ic></TBtn>
            <TBtn $w={26} $ml={8} $k="rec"><Ic w={20} h={28}><ellipse cx="10" cy="14" rx="9" ry="11" fill="none" stroke="#c84040" strokeWidth="1.4" /></Ic></TBtn>
          </TButtons>
          <Shuttle><span>&gt;&gt;&gt; +0 semitones</span><span>Sprung</span></Shuttle>
        </TransportLeft>
        <AutoCol>
          <Btn $h={20} $tone="grey" $dim $fs={12.2}>Internal</Btn>
          <AutoBtn $h={20} $tone="grey" $dim $fs={12.2}>Auto Play<Led $c="#5a4a18" /></AutoBtn>
          <AutoBtn $h={20} $tone="grey" $dim $fs={12.2}>Auto Return<Led $c="#5a4a18" /></AutoBtn>
        </AutoCol>
        <ClockGrid>
          <ClockPair>
            <ClockMain>00:00:02:14</ClockMain>
            <ClockCell>INT</ClockCell><ClockCell>FPS 30</ClockCell>
          </ClockPair>
          <ClockPair>
            <ClockMain>002|01|1830</ClockMain>
            <ClockCell>120.00</ClockCell><ClockCell>4/4</ClockCell>
          </ClockPair>
        </ClockGrid>
        <Metro $tone="grey">
          <svg width="24" height="34" viewBox="0 0 24 34"><path d="M8 2h8l6 30H2z" fill="none" stroke="#eee" strokeWidth="2" /><path d="M4 24h16" stroke="#eee" strokeWidth="2" /><path d="M12 24l8-18" stroke="#eee" /></svg>
        </Metro>
        <SelPanel>
          <SelCol>
            <SelHead $pl={39}>Selection</SelHead>
            <SelLine><SelName>Start</SelName><DashVal>----|--|----</DashVal></SelLine>
            <SelLine $mt={1}><SelName>End</SelName><DashVal>----|--|----</DashVal></SelLine>
            <SelLine $mt={1}><SelName>Length</SelName><DashVal>----|--|----</DashVal></SelLine>
          </SelCol>
          <SelCol>
            <SelHead $pl={38}>Punch</SelHead>
            <PunchRow $mt={1}><Btn $w={27} $h={19} $tone="alert" $dim $fs={12.2}>In</Btn><PunchVal>00:02:07:17</PunchVal></PunchRow>
            <PunchRow $mt={1}><Btn $w={27} $h={19} $tone="alert" $dim $fs={12.2}>Out</Btn><PunchVal>00:04:21:24</PunchVal></PunchRow>
          </SelCol>
        </SelPanel>
        <AlertCol>
          <Btn $h={20} $tone="alert" $dim $fs={12.2}>solo</Btn>
          <Btn $h={20} $tone="alert" $dim $fs={12.2}>audition</Btn>
          <Btn $h={20} $tone="alert" $dim $fs={12.2}>feedback</Btn>
        </AlertCol>
        <Chev ml={6} mt={6} />
      </TransportBar>
      <MainRow>
        <StripBox $bg={BUS} $w={84.5} $grow>
          <StripHead $h={18}><SquareBtn><WidthIcon /></SquareBtn><SquareBtn><CloseIcon /></SquareBtn></StripHead>
          <Btn $h={17} $mt={2}>master</Btn>
          <Btn $h={18} $mt={1}>*8*</Btn>
          <TwoCols $mt={2} $h={20}><Btn $fs={12.4}>Ø1</Btn><Btn $fs={12.4}>Ø2</Btn></TwoCols>
          <ProcBox $h={241}><Proc k="blue" label="Fader" mt={1} /></ProcBox>
          <Meters m={{ pl: 11, fw: 16.5, fill: 53, mark: 53, bars: [[40], [40]], ml: 14, sml: 1, ticks: VISIBLE_30_50 }} />
          <TwoCols $mt={1} $h={19}><Btn>Grp</Btn><Btn>post</Btn></TwoCols>
          <Btn $h={18} $mt={2}>monito</Btn>
          <Btn $h={18} $mt={2}>Comments</Btn>
        </StripBox>
        <RightCol>
          <Toolbar>
            <SelectBox w={76.5}>Slide</SelectBox>
            {MODE_ICONS.map((ic, i) => (
              <ModeBtn key={i} $on={i === 0} $ml={i === 0 ? 5 : 2}><svg width="16" height="22" viewBox="0 0 16 22">{ic}</svg></ModeBtn>
            ))}
            <Chev ml={6} mt={-14} />
            <ZoomBtn $ml={15}><Mag sign="-" /></ZoomBtn>
            <ZoomBtn><Mag sign="+" /></ZoomBtn>
            <ZoomBtn><Mag sign="=" /></ZoomBtn>
            <SelectBox w={108} ml={2.5}>Playhead</SelectBox>
            <ZoomBtn $w={23.5} $plain><svg width="18" height="24"><path d="M3 4h6M3 20h6M6 4v16M12 12h5" stroke="#ccc" /><rect x="3" y="9" width="6" height="6" fill="none" stroke="#ccc" /></svg></ZoomBtn>
            <ZoomBtn $w={23.5} $plain><svg width="18" height="24"><path d="M3 4h6M3 20h6M6 4v16M12 12h5M14.500 9.500v5" stroke="#ccc" /><rect x="3" y="9" width="6" height="6" fill="none" stroke="#ccc" /></svg></ZoomBtn>
            <Chev ml={5} mt={-14} />
            <SelectBox w={102} ml={15}>No Grid</SelectBox>
            <SelectBox w={175} ml={2}>Beats/20</SelectBox>
            <SelectBox w={92.5} ml={1.5}>Mouse</SelectBox>
            <ZoomBtn $w={20} $ml={14.5} $plain><svg width="12" height="20"><path d="M9 2L3 10l6 8" fill="none" stroke="#ddd" strokeWidth="1.6" /></svg></ZoomBtn>
            <ZoomBtn $w={20} $ml={2.4} $plain><svg width="12" height="20"><path d="M3 2l6 8-6 8" fill="none" stroke="#ddd" strokeWidth="1.6" /></svg></ZoomBtn>
            <NudgeClock>00:00:05:00</NudgeClock>
            <ZoomBtn $w={23} $ml={12.5} $plain><svg width="10" height="14"><path d="M7 1v12L3 10H1V4h2z" fill="#ddd" stroke="#222" strokeWidth=".5" /></svg></ZoomBtn>
            <Chev ml={4} mt={-14} />
          </Toolbar>
          <LowerRow>
            <EditorCol>
              <EditorTop>
                <RulerLabels>
                  {['Timecode', 'Meter', 'Tempo', 'Loop/Punch Ranges', 'CD Markers', 'Location Markers'].map(l => <RulerLabel key={l}>{l}</RulerLabel>)}
                  <TrackHeader $h={371}>
                    <HeadLeft><TrackName /></HeadLeft>
                    <HeadBtns><Btn $tone="mute" /></HeadBtns>
                  </TrackHeader>
                  <TrackHeader $h={63}>
                    <HeadLeft>
                      <TrackName>Bus 2</TrackName>
                      <MiniFader><MiniDark /><MiniMark /></MiniFader>
                    </HeadLeft>
                    <HeadBtns>
                      <Btn $tone="mute" $dim $fs={12.2}>m</Btn><Btn $tone="solo" $dim $fs={12.2}>s</Btn>
                      <Btn $tone="grey" $fs={12.2}>a</Btn><Btn $tone="grey" $fs={12.2}>g</Btn>
                    </HeadBtns>
                  </TrackHeader>
                </RulerLabels>
                <Canvas>
                  <Ruler>
                    <RulerText $x={2}>00:00:00:00</RulerText>
                    <RulerText $x={272}>00:05:00:00</RulerText>
                    {[108, 162, 216, 270, 324, 378, 432, 486].map(x => <RulerTick key={x} $x={x} $h={x === 270 ? 12 : 3} />)}
                  </Ruler>
                  <MarkRow $c="#5f6370" /><MarkRow $c="#6a6e7a" /><MarkRow $c="#868a95" /><MarkRow $c="#8e929c" /><MarkRow $c="#999ca7" />
                  <Track $h={370} /><Track $h={63} />
                  <Marker $x={0} $y={16} $w={27} $h={14} $bg="#a85868" $bd="#d04060">&nbsp;4/4</Marker>
                  <Marker $x={0} $y={31} $w={50} $h={14} $bg="#a85868" $bd="#d04060">&nbsp;120.00</Marker>
                  <Marker $x={115} $y={46} $w={55} $h={14} $bg="#8f6870" $bd="#8a3a40" $pl={14}>Punch</Marker>
                  <Marker $x={179.5} $y={46} $w={56} $h={14} $bg="#8f6870" $bd="#8a3a40">Punch</Marker>
                  <Marker $x={35} $y={61} $w={52} $h={14} $bg="#40b4a0" $bd="#20d0c0" $pl={9}>mark1</Marker>
                  <Marker $x={2} $y={76} $w={43} $h={14} $bg="#627f74" $bd="#3f7a55" $pl={12}>start</Marker>
                  <MarkerFlag $x={0} $y={15} width="12" height="13"><path d="M0 0h11L2 13H0z" fill="#ff0000" /></MarkerFlag>
                  <MarkerFlag $x={115} $y={46} width="12" height="14"><path d="M1 14V0h9z" fill="#7a3038" /></MarkerFlag>
                  <MarkerFlag $x={223} $y={46} width="13" height="14"><path d="M12 14V0H2z" fill="#7a3038" /></MarkerFlag>
                  <MarkerFlag $x={35} $y={61} width="8" height="14"><path d="M0 0h7L4 14H3z" fill="#20e0d0" /></MarkerFlag>
                  <MarkerFlag $x={2} $y={76} width="7" height="14"><path d="M0 3l5 4-5 4z" fill="#3f7a55" /></MarkerFlag>
                  <MarkerFlag $x={0} $y={513} width="11" height="11"><path d="M0 0l5 0 5 11H0z" fill="#ff0000" /></MarkerFlag>
                  <VLine $x={0} $c="#c01818" $top={15} />
                  <VLine $x={236} $c="#0a10d8" $top={15} />
                </Canvas>
              </EditorTop>
              <Handle />
              <SummaryRow>
                <NavCol>
                  <NavBtn><svg width="8" height="12"><path d="M6 1L2 6l4 5" fill="none" stroke="#999" strokeWidth="1.3" /></svg></NavBtn>
                  <NavBtn><svg width="8" height="12"><path d="M2 1l4 5-4 5" fill="none" stroke="#999" strokeWidth="1.3" /></svg></NavBtn>
                </NavCol>
                <Summary>
                  {[0, 1, 2, 3, 4, 5, 6].map(i => <SumLine key={i} />)}
                  <SumMark $x={634} $c="#d8d860" />
                  <SumMark $x={0} $c="#c25a30" />
                  <SumMark $x={1} $c="#8a8a8a" $w={4} $bottom={22} />
                </Summary>
                <NavCol>
                  <NavBtn><svg width="12" height="8"><path d="M1 6l5-4 5 4" fill="none" stroke="#999" strokeWidth="1.3" /></svg></NavBtn>
                  <NavBtn><svg width="12" height="8"><path d="M1 2l5 4 5-4" fill="none" stroke="#999" strokeWidth="1.3" /></svg></NavBtn>
                </NavCol>
              </SummaryRow>
            </EditorCol>
            <TrackList>
              <ListHead>
                {['I', 'R', 'M', 'S', 'SI', 'SS'].map(h => <ListHeadCell key={h}>{h}</ListHeadCell>)}
                <ListHeadCell $left>Name</ListHeadCell>
                <ListHeadCell>V</ListHeadCell><ListHeadCell>A</ListHeadCell>
              </ListHead>
              {TRACKS.map((t, i) => (
                <TrackRow key={i} $alt={i % 2 === 1}>
                  <span />
                  {i === 0 ? <span /> : <RecDot $on={i === 2} />}
                  <Pencil />
                  {i === 0 ? <span /> : <Swatch $c="#2a3a10" />}
                  {i === 0 ? <span /> : <Swatch $c="#0c3a30" />}
                  {i === 0 ? <span /> : <LockIc />}
                  <TrackRowName>{t}</TrackRowName>
                  <Checkbox /><Checkbox />
                </TrackRow>
              ))}
            </TrackList>
            <Tabs>
              <Tab $h={62}>Regions</Tab>
              <Tab $h={120} $on>Tracks &amp; Busses</Tab>
              <Tab $h={78}>Snapshots</Tab>
              <Tab $h={102}>Route Groups</Tab>
              <Tab $h={112}>Ranges &amp; Marks</Tab>
            </Tabs>
          </LowerRow>
        </RightCol>
      </MainRow>
    </WinBody>
  </Win>
);

const BigClock = () => (
  <Win $x={961} $y={481} $w={1786} $h={354} $z={3}>
    <Chrome title="Big Clock" idp="l3" />
    <BigClockBody>00:00:02:14</BigClockBody>
  </Win>
);

const App = () => (
  <Desktop>
    <Global />
    <IconColumn>
      <DeskIcon $h={80}><ComputerIcon /><DeskLabel>Computer</DeskLabel></DeskIcon>
      <DeskIcon $h={80}><HomeIcon /><DeskLabel>paul's Home</DeskLabel></DeskIcon>
      <DeskIcon $h={100}><TrashIcon /><DeskLabel>Trash</DeskLabel></DeskIcon>
      <DeskIcon $h={100}><ArdourLogo w={48} h={42} idp="l0" /><DeskLabel>Ardour-3.0beta1a-dbg</DeskLabel></DeskIcon>
    </IconColumn>
    <Mixer />
    <Ardour />
    <BigClock />
    <EdgeMark $x={1880} $w={24} />
    <EdgeMark $x={2365} $w={330} />
    <Cursor width="14" height="20" viewBox="0 0 14 20"><path d="M1 1v15l4-3 3 6 2-1-3-6h5z" fill="#111" stroke="#eee" strokeWidth=".8" /></Cursor>
  </Desktop>
);

export default App;
